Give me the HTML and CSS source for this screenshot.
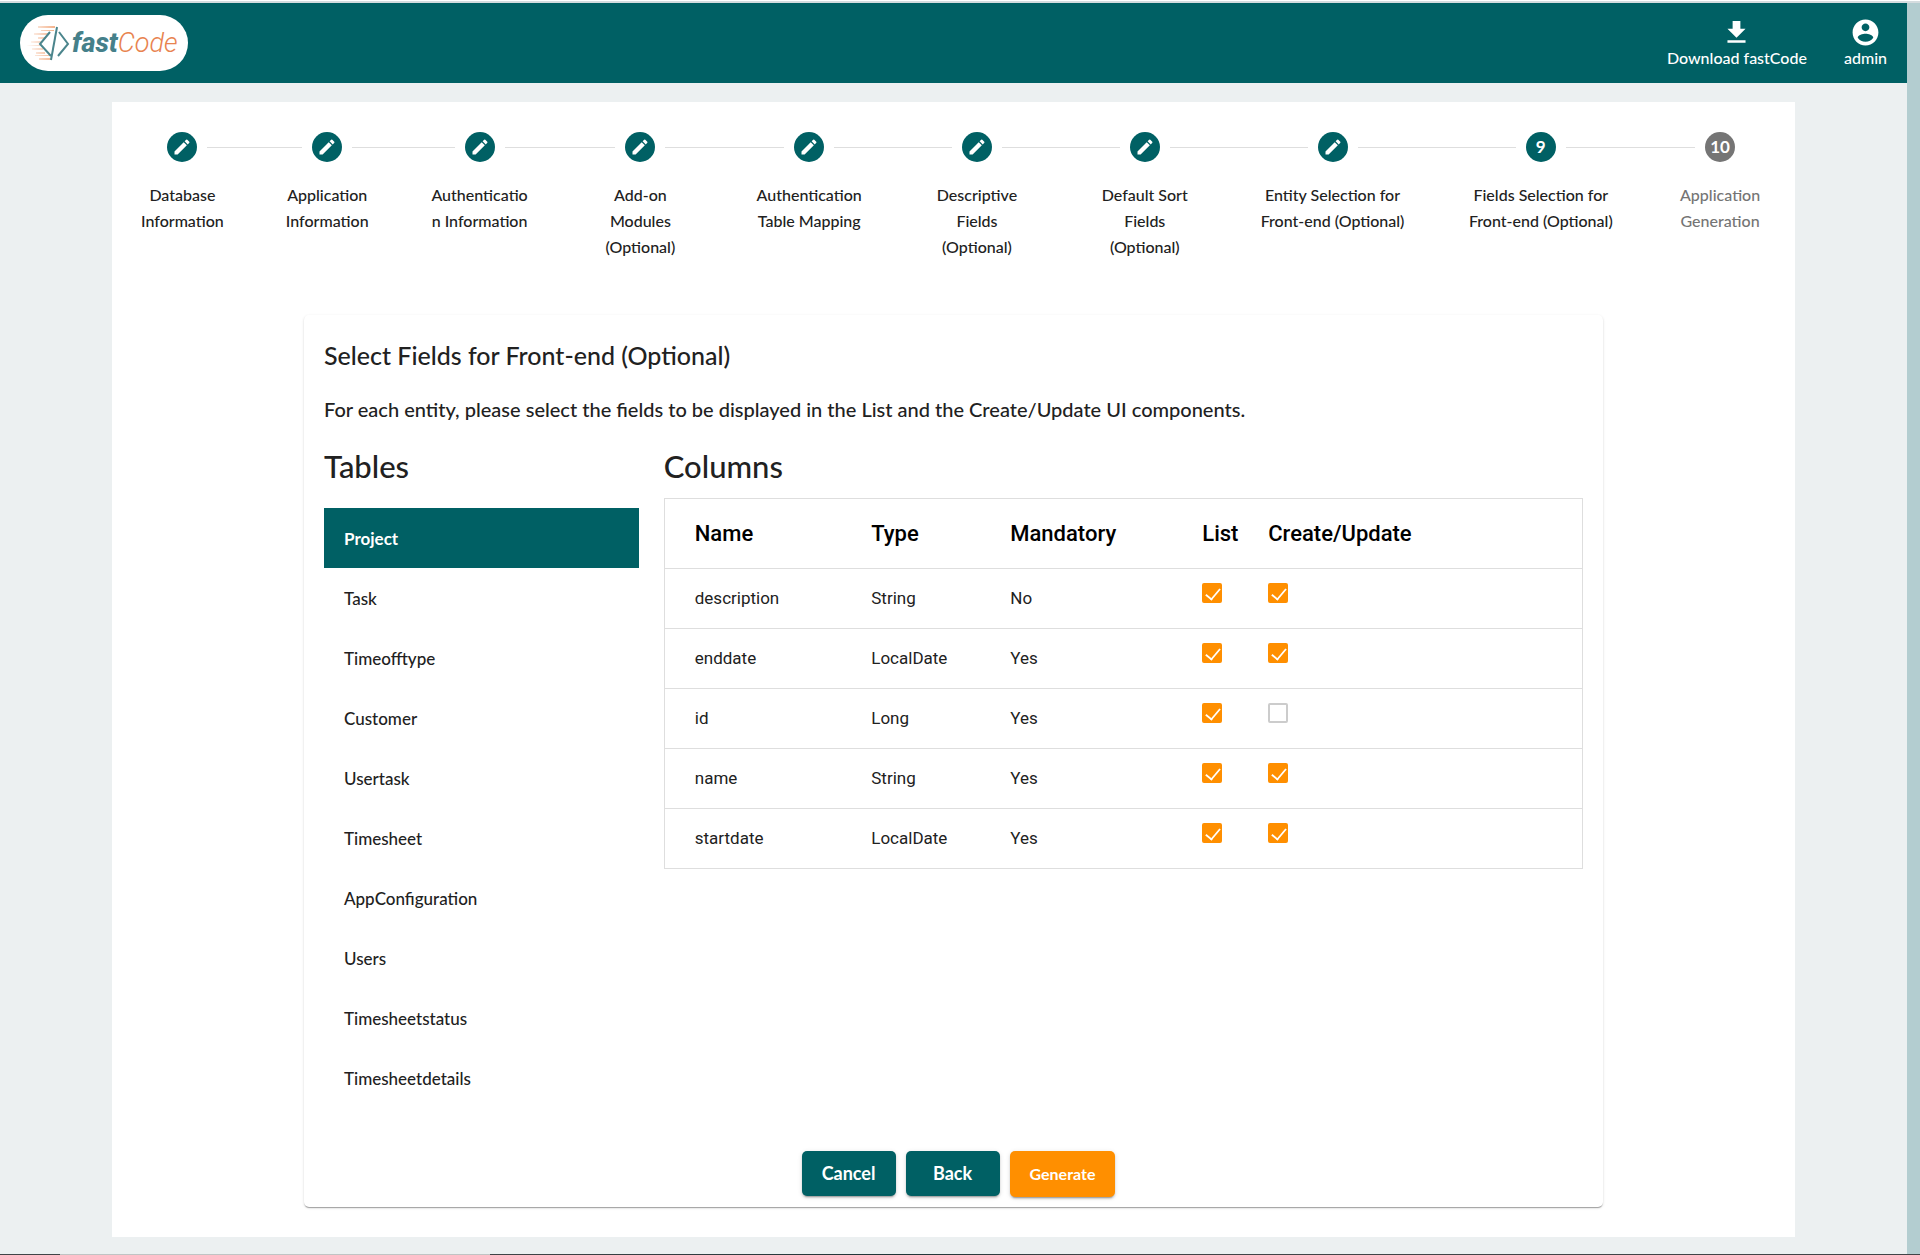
FILE: index.html
```
<!DOCTYPE html>
<html lang="en">
<head>
  <meta charset="UTF-8" />
  <meta name="viewport" content="width=device-width, initial-scale=1.0"/>
  <title>fastCode</title>
  <link rel="stylesheet" href="styles.css">
</head>
<body>

  <!-- Shared icons -->
  <svg class="icon-defs" width="0" height="0">
    <symbol id="pencil" viewBox="0 0 24 24">
      <path d="M3 17.25V21h3.75L17.81 9.94l-3.75-3.75L3 17.25zM20.71 7.04a1 1 0 0 0 0-1.41l-2.34-2.34a1 1 0 0 0-1.41 0l-1.83 1.83 3.75 3.75 1.83-1.83z"/>
    </symbol>
  </svg>

  <div class="window">
    <div class="page">
      <header class="topbar">
        <a class="logo" href="#">
          <svg class="logo-mark" viewBox="0 0 46 36" width="46" height="36">
            <defs>
              <linearGradient id="streak" gradientUnits="userSpaceOnUse" x1="0" y1="0" x2="28" y2="0">
                <stop offset="0" stop-color="#f3b48f" stop-opacity="0"/>
                <stop offset="1" stop-color="#f3b48f"/>
              </linearGradient>
            </defs>
            <path fill="url(#streak)" d="M12 1h17v2H12zM15 5h13v1H15zM8 8h15v2H8zM12 12h8v2h-8zM5 16h11v2H5zM1 20h13v1H1zM6 23h11v2H6zM10 27h9v2h-9zM9 30h15v1H9zM13 33h12v2H13z"/>
            <g fill="none" stroke="#4b858c" stroke-width="2">
              <path d="M24 7L14 19l11 12"/>
              <path d="M31 2l-6 33"/>
              <path d="M33 7l9 12-10 12"/>
            </g>
          </svg>
          <span class="logo-text"><b>fast</b><i>Code</i></span>
        </a>
        <nav class="actions">
          <a class="action" href="#">
            <svg viewBox="0 0 24 24" width="31" height="31"><path d="M19 9h-4V3H9v6H5l7 7 7-7zM5 18v2h14v-2H5z"/></svg>
            <span>Download fastCode</span>
          </a>
          <a class="action" href="#">
            <svg viewBox="0 0 24 24" width="31" height="31"><path d="M12 2C6.48 2 2 6.48 2 12s4.48 10 10 10 10-4.48 10-10S17.52 2 12 2zm0 3c1.66 0 3 1.34 3 3s-1.34 3-3 3-3-1.34-3-3 1.34-3 3-3zm0 14.2c-2.5 0-4.71-1.28-6-3.22.03-1.99 4-3.08 6-3.08 1.99 0 5.97 1.09 6 3.08-1.29 1.94-3.5 3.22-6 3.22z"/></svg>
            <span>admin</span>
          </a>
        </nav>
      </header>

      <main class="content">
        <!-- Steps -->
        <ol class="stepper">
          <li class="step"><span class="dot"><svg><use href="#pencil"/></svg></span><span class="label">Database<br>Information</span></li>
          <li class="step"><span class="dot"><svg><use href="#pencil"/></svg></span><span class="label">Application<br>Information</span></li>
          <li class="step"><span class="dot"><svg><use href="#pencil"/></svg></span><span class="label">Authenticatio<br>n Information</span></li>
          <li class="step"><span class="dot"><svg><use href="#pencil"/></svg></span><span class="label">Add-on<br>Modules<br>(Optional)</span></li>
          <li class="step"><span class="dot"><svg><use href="#pencil"/></svg></span><span class="label">Authentication<br>Table Mapping</span></li>
          <li class="step"><span class="dot"><svg><use href="#pencil"/></svg></span><span class="label">Descriptive<br>Fields<br>(Optional)</span></li>
          <li class="step"><span class="dot"><svg><use href="#pencil"/></svg></span><span class="label">Default Sort<br>Fields<br>(Optional)</span></li>
          <li class="step"><span class="dot"><svg><use href="#pencil"/></svg></span><span class="label">Entity Selection for<br>Front-end (Optional)</span></li>
          <li class="step"><span class="dot">9</span><span class="label">Fields Selection for<br>Front-end (Optional)</span></li>
          <li class="step pending"><span class="dot">10</span><span class="label">Application<br>Generation</span></li>
        </ol>

        <!-- Field selection -->
        <section class="card">
          <h2>Select Fields for Front-end (Optional)</h2>
          <p class="hint">For each entity, please select the fields to be displayed in the List and the Create/Update UI components.</p>

          <div class="panels">
            <div class="tables">
              <h1>Tables</h1>
              <div class="table-list">
                <button class="entity selected">Project</button>
                <button class="entity">Task</button>
                <button class="entity">Timeofftype</button>
                <button class="entity">Customer</button>
                <button class="entity">Usertask</button>
                <button class="entity">Timesheet</button>
                <button class="entity">AppConfiguration</button>
                <button class="entity">Users</button>
                <button class="entity">Timesheetstatus</button>
                <button class="entity">Timesheetdetails</button>
              </div>
            </div>

            <div class="columns">
              <h1>Columns</h1>
              <table>
                <thead>
                  <tr>
                    <th class="col-name">Name</th>
                    <th class="col-type">Type</th>
                    <th class="col-mandatory">Mandatory</th>
                    <th class="col-list">List</th>
                    <th>Create/Update</th>
                  </tr>
                </thead>
                <tbody>
                  <tr>
                    <td>description</td><td>String</td><td>No</td>
                    <td><input type="checkbox" aria-label="List description" checked></td>
                    <td><input type="checkbox" aria-label="Create/Update description" checked></td>
                  </tr>
                  <tr>
                    <td>enddate</td><td>LocalDate</td><td>Yes</td>
                    <td><input type="checkbox" aria-label="List enddate" checked></td>
                    <td><input type="checkbox" aria-label="Create/Update enddate" checked></td>
                  </tr>
                  <tr>
                    <td>id</td><td>Long</td><td>Yes</td>
                    <td><input type="checkbox" aria-label="List id" checked></td>
                    <td><input type="checkbox" aria-label="Create/Update id"></td>
                  </tr>
                  <tr>
                    <td>name</td><td>String</td><td>Yes</td>
                    <td><input type="checkbox" aria-label="List name" checked></td>
                    <td><input type="checkbox" aria-label="Create/Update name" checked></td>
                  </tr>
                  <tr>
                    <td>startdate</td><td>LocalDate</td><td>Yes</td>
                    <td><input type="checkbox" aria-label="List startdate" checked></td>
                    <td><input type="checkbox" aria-label="Create/Update startdate" checked></td>
                  </tr>
                </tbody>
              </table>
            </div>
          </div>

          <div class="buttons">
            <button class="btn">Cancel</button>
            <button class="btn">Back</button>
            <button class="btn generate">Generate</button>
          </div>
        </section>
      </main>
    </div>
    <div class="scroll-track"></div>
  </div>
  <div class="bottom-line"></div>

</body>
</html>
```
FILE: styles.css
```
* {
  box-sizing: border-box;
}

body {
  margin: 0;
  min-height: 100vh;
  display: flex;
  flex-direction: column;
  border-top: 1px solid #ffffff;
  font-family: Lato, sans-serif;
  font-weight: 500;
  color: #212121;
  background: #ecf0f1;
}

h1, h2, p, ol {
  margin: 0;
  padding: 0;
  font-weight: 500;
}

button {
  font-family: inherit;
  border: none;
  cursor: pointer;
}

.icon-defs {
  position: absolute;
}

.window {
  flex: 1;
  display: flex;
  border-top: 2px solid #d5dcdf;
}

.page {
  flex: 1;
}

.scroll-track {
  width: 13px;
  background: #b3cdd0;
}

.bottom-line {
  height: 1px;
  background: linear-gradient(to right, #404447 60px, #c0c4c4 60px, #c0c4c4 490px, #404447 490px, #1e3538 900px, #404447 1100px);
}

/* Top bar */
.topbar {
  height: 80px;
  padding: 0 20px;
  display: flex;
  align-items: center;
  justify-content: space-between;
  background: #006064;
}

.logo {
  width: 168px;
  height: 56px;
  padding-left: 6px;
  display: flex;
  align-items: center;
  border-radius: 28px;
  background: #ffffff;
  text-decoration: none;
}

.logo-text {
  font: italic 27px/30px Roboto, sans-serif;
}

.logo-text b {
  font-weight: 800;
  color: #45808a;
}

.logo-text i {
  font-weight: 300;
  color: #e8834f;
}

.actions {
  display: flex;
  gap: 37px;
  padding-bottom: 2px;
}

.action {
  display: flex;
  flex-direction: column;
  align-items: center;
  font-size: 16px;
  line-height: 20px;
  color: #ffffff;
  text-decoration: none;
}

.action svg {
  fill: #ffffff;
}

/* Stepper */
.content {
  margin: 19px 112px 17px;
  padding: 30px 0;
  background: #ffffff;
}

.stepper {
  display: grid;
  grid-template-columns: 141fr 149fr 156fr 166fr 172fr 164fr 172fr 204fr 213fr 146fr;
  padding-right: 2px;
  list-style: none;
}

.step {
  display: grid;
  grid-template-columns: 1fr 30px 1fr;
  column-gap: 10px;
  row-gap: 20px;
  align-items: center;
  align-content: start;
}

.step::before,
.step::after {
  content: "";
  grid-row: 1;
  height: 1px;
  background: #dedede;
}

.step:first-child::before,
.step:last-child::after {
  background: none;
}

.dot {
  grid-column: 2;
  grid-row: 1;
  height: 30px;
  display: flex;
  align-items: center;
  justify-content: center;
  border-radius: 50%;
  background: #006064;
  color: #ffffff;
  font-size: 17px;
  line-height: 28px;
  font-weight: 700;
}

.dot svg {
  width: 20px;
  height: 20px;
  fill: #ffffff;
}

.label {
  grid-column: 1 / -1;
  font-size: 16px;
  line-height: 26px;
  text-align: center;
}

.pending .dot {
  background: #757575;
}

.pending .label {
  color: #757575;
}

/* Card */
.card {
  margin: 55px 192px 0;
  padding: 24px 20px 10px;
  border-radius: 5px;
  box-shadow: 0 2px 1px -1px rgba(0, 0, 0, 0.2), 0 1px 1px rgba(0, 0, 0, 0.14), 0 1px 3px rgba(0, 0, 0, 0.12);
}

h2 {
  font-size: 25px;
  line-height: 32px;
}

.hint {
  margin: 22px 0 21px;
  font-size: 20px;
  line-height: 32px;
}

.panels {
  display: flex;
  gap: 25px;
}

.tables {
  flex: 0 0 25%;
}

.columns {
  flex: 1;
}

h1 {
  font-size: 31px;
  line-height: 40px;
}

.table-list {
  margin-top: 22px;
}

.entity {
  display: block;
  width: 100%;
  height: 60px;
  padding: 0 20px;
  background: none;
  color: #212121;
  font-size: 17px;
  font-weight: 500;
  text-align: left;
}

.entity.selected {
  background: #006064;
  color: #ffffff;
  font-weight: 700;
}

table {
  width: 100%;
  margin-top: 12px;
  border: 1px solid #dedede;
  border-collapse: collapse;
  font-family: Roboto, sans-serif;
}

tr {
  border-bottom: 1px solid #dedede;
}

th {
  height: 70px;
  padding: 0;
  font-size: 22px;
  font-weight: 500;
  color: #000000;
  text-align: left;
}

td {
  height: 60px;
  padding: 0 0 2px;
  font-size: 17px;
  font-weight: 400;
}

th:first-child,
td:first-child {
  padding-left: 30px;
}

.col-name {
  width: 207px;
}

.col-type {
  width: 139px;
}

.col-mandatory {
  width: 192px;
}

.col-list {
  width: 66px;
}

input[type="checkbox"] {
  appearance: none;
  display: block;
  width: 20px;
  height: 20px;
  margin: 0 0 10px;
  border: 2px solid #cccccc;
  border-radius: 2px;
}

input[type="checkbox"]:checked {
  border-color: #ff8f00;
  background: #ff8f00;
}

input[type="checkbox"]:checked::before {
  content: "";
  display: block;
  width: 14px;
  height: 7px;
  margin: 3px 1px;
  border-left: 2px solid #ffffff;
  border-bottom: 2px solid #ffffff;
  transform: rotate(-50deg) scale(0.9);
}

/* Buttons */
.buttons {
  margin-top: 43px;
  padding-left: 10px;
  display: flex;
  align-items: flex-start;
  justify-content: center;
  gap: 10px;
}

.btn {
  min-width: 94px;
  height: 45px;
  padding: 0 20px 2px;
  border-radius: 5px;
  background: #006064;
  color: #ffffff;
  font-size: 18px;
  font-weight: 700;
  box-shadow: 0 3px 1px -2px rgba(0, 0, 0, 0.2), 0 2px 2px rgba(0, 0, 0, 0.14), 0 1px 5px rgba(0, 0, 0, 0.12);
}

.generate {
  height: 46px;
  background: #ff8f00;
  font-size: 16px;
}
```
